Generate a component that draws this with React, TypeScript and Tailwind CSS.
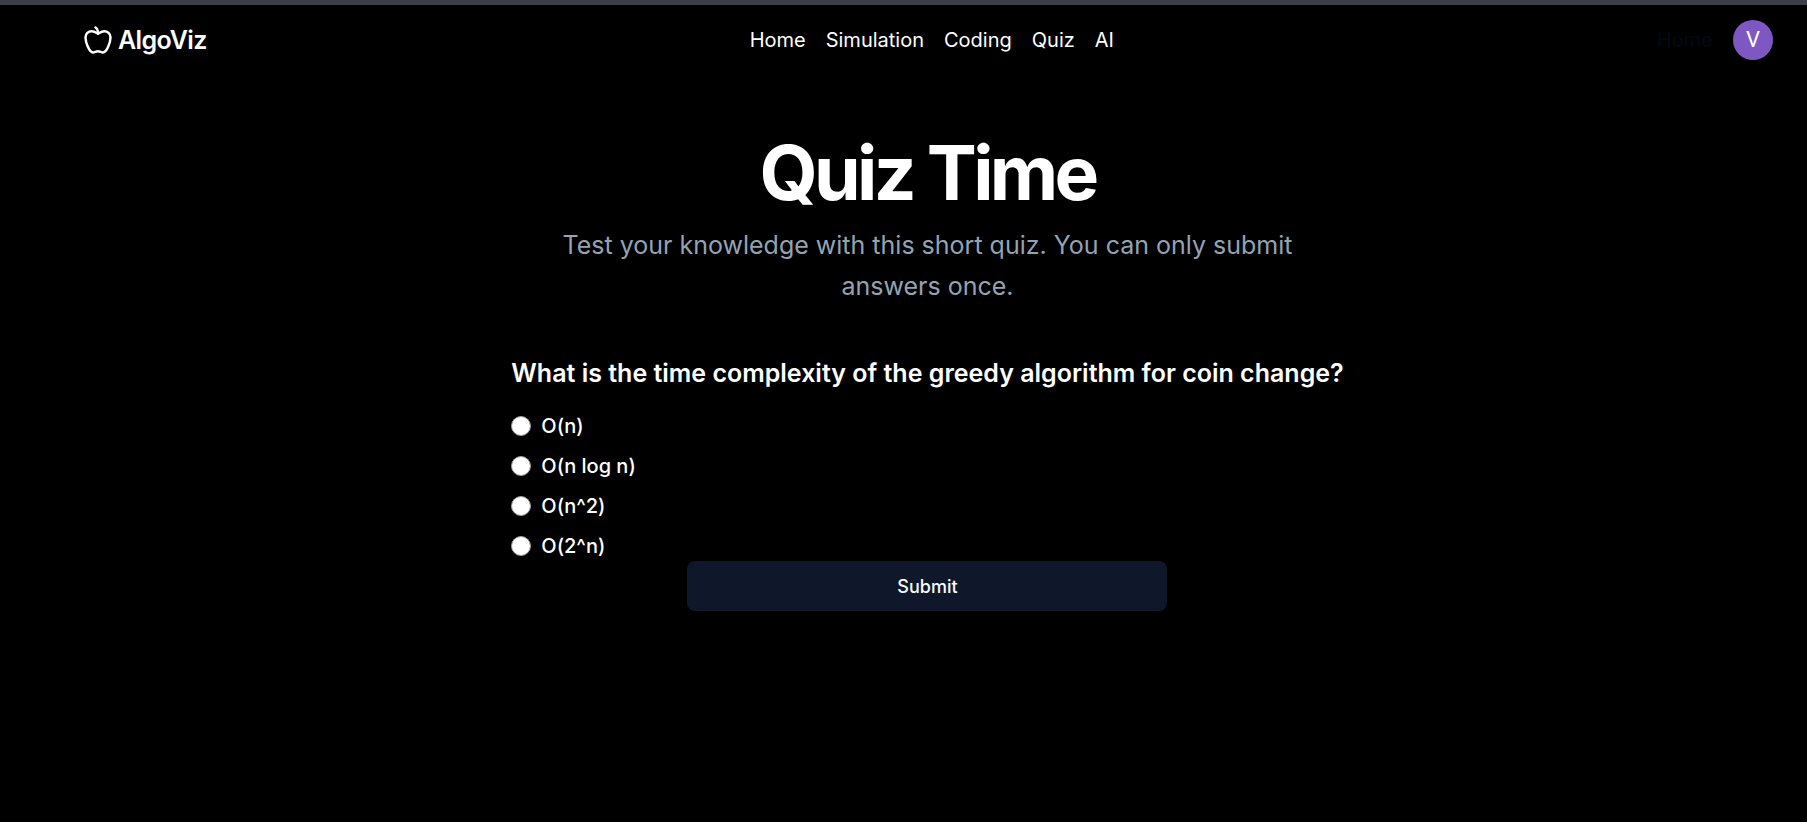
import { useState } from "react";

const links = ["Home", "Simulation", "Coding", "Quiz", "AI"];
const options = ["O(n)", "O(n log n)", "O(n^2)", "O(2^n)"];

function AppleIcon() {
  return (
    <svg
      width="30"
      height="30"
      viewBox="0 0 24 24"
      fill="none"
      stroke="currentColor"
      strokeWidth="2"
      strokeLinecap="round"
      strokeLinejoin="round"
      aria-hidden="true"
    >
      <path d="M12 20.94c1.5 0 2.75 1.06 4 1.06 3 0 6-8 6-12.22A4.91 4.91 0 0 0 17 5c-2.22 0-4 1.44-5 2-1-.56-2.78-2-5-2a4.9 4.9 0 0 0-5 4.78C2 14 5 22 8 22c1.25 0 2.5-1.06 4-1.06Z" />
      <path d="M10 2c1 .5 2 2 2 5" />
    </svg>
  );
}

function Header() {
  return (
    <header className="flex h-[70px] items-center justify-between pr-[34px] pl-[83px]">
      <a href="#" className="flex items-center gap-[5px] text-[25px] leading-[35px] font-semibold tracking-tight">
        <AppleIcon />
        AlgoViz
      </a>
      <nav className="flex gap-5 text-[20px] leading-[30px]">
        {links.map((link) => (
          <a key={link} href="#">
            {link}
          </a>
        ))}
      </nav>
      <div className="flex items-center gap-5 text-[20px] leading-[30px]">
        <a href="#" className="text-[#020817]">
          Home
        </a>
        <button
          type="button"
          aria-label="Account"
          className="flex size-10 items-center justify-center rounded-full bg-[#7e57c2] font-['Roboto',sans-serif] text-[22px]"
        >
          V
        </button>
      </div>
    </header>
  );
}

export default function App() {
  const [answer, setAnswer] = useState("");

  return (
    <div className="min-h-screen border-t-[5px] border-[#3d3f48] bg-black font-['Inter',sans-serif] text-white">
      <Header />
      <main className="flex flex-col items-center pt-[60px] pl-12">
        <h1 className="text-[75px] leading-[75px] font-bold tracking-tighter">Quiz Time</h1>
        <p className="mt-[15px] max-w-[750px] text-center text-[25px] leading-[41px] text-[#94a3b3]">
          Test your knowledge with this short quiz. You can only submit answers once.
        </p>
        <form className="mt-[46px] flex flex-col items-center" onSubmit={(e) => e.preventDefault()}>
          <fieldset className="w-full">
            <legend className="text-[25px] leading-[40px] font-semibold">
              What is the time complexity of the greedy algorithm for coin change?
            </legend>
            <div className="flex flex-col gap-[10px] pt-[18px]">
              {options.map((option) => (
                <label key={option} className="flex items-center gap-[10px] text-[20px] leading-[30px] font-medium">
                  <input
                    type="radio"
                    name="answer"
                    value={option}
                    checked={answer === option}
                    onChange={() => setAnswer(option)}
                    className="size-5 appearance-none rounded-full border border-[#9a9a9a] bg-white checked:border-[6px] checked:border-blue-600"
                  />
                  {option}
                </label>
              ))}
            </div>
          </fieldset>
          <button
            type="submit"
            className="h-[50px] w-[480px] rounded-lg bg-slate-900 text-[18px] leading-[25px] font-medium text-slate-50"
          >
            Submit
          </button>
        </form>
      </main>
    </div>
  );
}
